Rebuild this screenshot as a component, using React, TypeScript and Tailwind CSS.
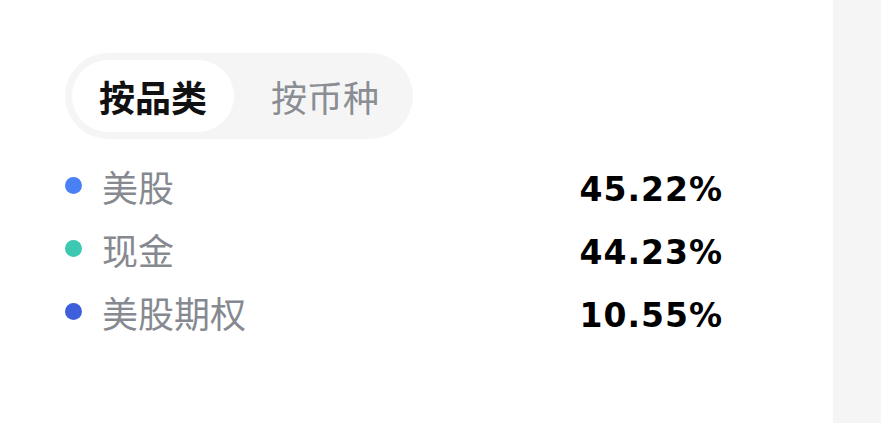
import { useState } from 'react'

const rows = [
  { name: '美股', value: '45.22%', dot: 'bg-[#4a80f6]' },
  { name: '现金', value: '44.23%', dot: 'bg-[#3dc8b1]' },
  { name: '美股期权', value: '10.55%', dot: 'bg-[#3d5fdb]' },
]

const tabs = ['按品类', '按币种']

function App() {
  const [active, setActive] = useState(0)

  return (
    <div className="flex h-[423px] w-full bg-[#f5f5f5] font-['Noto_Sans_CJK_SC',sans-serif]">
      <div className="w-[833px] bg-white pl-[65px] pt-[53px]">
        <div className="inline-flex h-[86px] items-center gap-[10px] rounded-full bg-[#f5f5f5] p-[7px]">
          {tabs.map((tab, i) => (
            <button
              key={tab}
              onClick={() => setActive(i)}
              className={`flex h-[72px] items-center rounded-full px-[27px] text-[36px] leading-none ${
                active === i ? 'bg-white font-bold text-[#111111]' : 'text-[#8a8d93]'
              }`}
            >
              {tab}
            </button>
          ))}
        </div>

        <div className="mt-[15px] w-[657px]">
          {rows.map((row) => (
            <div key={row.name} className="flex h-[63px] items-center justify-between">
              <div className="flex items-center">
                <span className={`h-[17px] w-[17px] rounded-full ${row.dot}`} />
                <span className="ml-[20px] text-[36px] leading-none text-[#86898f]">
                  {row.name}
                </span>
              </div>
              <span className="mr-[-1px] mt-[8px] font-['DejaVu_Sans',sans-serif] text-[33px] font-bold leading-none tracking-[1px] text-black">
                {row.value}
              </span>
            </div>
          ))}
        </div>
      </div>
    </div>
  )
}

export default App
